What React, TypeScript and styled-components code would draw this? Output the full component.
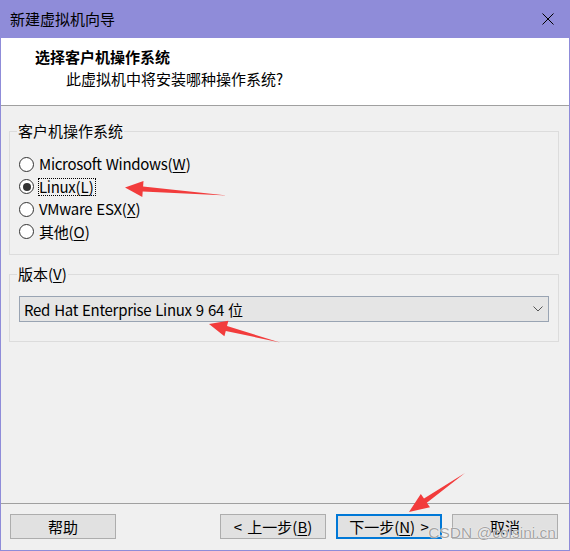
import React from 'react';
import styled, { createGlobalStyle } from 'styled-components';

const GlobalStyle = createGlobalStyle`
    body {
        margin: 0;
        background: #f0f0f0;
    }
    * {
        box-sizing: border-box;
    }
`;

const uiFont = `"Noto Sans CJK SC", "Noto Sans", sans-serif`;

const Window = styled.div`
    position: relative;
    width: 570px;
    height: 551px;
    display: flex;
    flex-direction: column;
    background: #f0f0f0;
    border: 1px solid #8f8cd9;
    border-top: 0;
    font-family: ${uiFont};
    font-size: 15px;
    color: #000;
`;

const TitleBar = styled.div`
    height: 38px;
    flex-shrink: 0;
    display: flex;
    align-items: center;
    justify-content: space-between;
    background: #8f8cd9;
    padding-left: 9px;
`;

const TitleText = styled.span`
    line-height: 20px;
`;

const CloseBox = styled.div`
    width: 42px;
    height: 38px;
    display: flex;
    align-items: center;
    justify-content: center;
`;

const Header = styled.div`
    height: 68px;
    flex-shrink: 0;
    background: #fff;
    border-bottom: 1px solid #a0a0a0;
    padding: 8px 0 0 34px;
`;

const Heading = styled.div`
    font-weight: bold;
    line-height: 22px;
`;

const SubHeading = styled.div`
    line-height: 22px;
    margin-left: 31px;
`;

const Body = styled.div`
    flex: 1;
    padding: 15px 10px 0 8px;
`;

const Group = styled.fieldset<{ $gap?: number }>`
    margin: ${({ $gap }) => $gap ?? 0}px 0 0;
    padding: 0 7px ${({ $gap }) => ($gap ? 19 : 11)}px;
    border: 1px solid #dcdcdc;
    min-width: 0;
`;

const Legend = styled.legend`
    padding: 0 1px;
    line-height: 20px;
`;

const RadioList = styled.div`
    padding-top: 12px;
    display: flex;
    flex-direction: column;
`;

const RadioRow = styled.div`
    height: 22.5px;
    display: flex;
    align-items: center;
    gap: 4px;
`;

const RadioCircle = styled.span<{ $checked?: boolean }>`
    width: 15px;
    height: 15px;
    margin-left: 2px;
    border-radius: 50%;
    border: 1px solid #333;
    background: #fff;
    display: flex;
    align-items: center;
    justify-content: center;
    &::after {
        content: '';
        width: 8px;
        height: 8px;
        border-radius: 50%;
        background: ${({ $checked }) => ($checked ? '#333' : 'transparent')};
    }
`;

const RadioLabel = styled.span<{ $focused?: boolean }>`
    line-height: 16px;
    border: 1px dotted ${({ $focused }) => ($focused ? '#000' : 'transparent')};
    padding: 0 1px 0 0;
`;

const Latin = styled.span`
    letter-spacing: -0.3px;
    word-spacing: 1px;
`;

const Key = styled.span`
    text-decoration: underline;
    text-underline-offset: 2px;
`;

const Select = styled.div`
    margin: 12px 2px 0;
    height: 26px;
    display: flex;
    align-items: center;
    justify-content: space-between;
    padding: 0 5px 0 4px;
    background: #e5e5e5;
    border: 1px solid #99a4b3;
`;

const Footer = styled.div`
    flex-shrink: 0;
    display: flex;
    gap: 10px;
    padding: 10px 11px 11px 9px;
    border-top: 1px solid #a0a0a0;
`;

const Button = styled.button<{ $primary?: boolean; $push?: boolean }>`
    width: 106px;
    height: 25px;
    padding: 0;
    font: inherit;
    color: #000;
    line-height: 20px;
    word-spacing: 2px;
    background: #e1e1e1;
    border: ${({ $primary }) => ($primary ? '2px solid #0078d7' : '1px solid #adadad')};
    margin-right: ${({ $push }) => ($push ? 'auto' : '0')};
`;

const Watermark = styled.div`
    position: absolute;
    right: 13px;
    bottom: 8px;
    font-family: 'Liberation Sans', Arial, sans-serif;
    font-size: 15.5px;
    line-height: 18px;
    color: rgba(140, 140, 140, 0.8);
    text-shadow: 0 0 1px #fff, 0 0 1px #fff;
    pointer-events: none;
`;

const Annotations = styled.svg`
    position: absolute;
    top: 0;
    left: -1px;
    pointer-events: none;
`;

const arrows = [
    '125,187.5 143.5,180.9 143.1,186.4 227,195.5 142.7,191.4 142.3,196.9',
    '209,324 228.4,320.8 227,326.1 280,342.5 225.8,330.9 224.4,336.2',
    '409,512 430,507.2 426.8,502.7 465,473 424,498.5 420.8,494',
];

const options = [
    { label: 'Microsoft Windows', key: 'W', checked: false },
    { label: 'Linux', key: 'L', checked: true },
    { label: 'VMware ESX', key: 'X', checked: false },
    { label: '其他', key: 'O', checked: false },
];

const App: React.FC = () => {
    return (
        <>
            <GlobalStyle />
            <Window>
                <TitleBar>
                    <TitleText>新建虚拟机向导</TitleText>
                    <CloseBox>
                        <svg width="12" height="12" viewBox="0 0 12 12">
                            <path d="M0.5 0.5 L11.5 11.5 M11.5 0.5 L0.5 11.5" stroke="#000" strokeWidth="1" />
                        </svg>
                    </CloseBox>
                </TitleBar>
                <Header>
                    <Heading>选择客户机操作系统</Heading>
                    <SubHeading>此虚拟机中将安装哪种操作系统?</SubHeading>
                </Header>
                <Body>
                    <Group>
                        <Legend>客户机操作系统</Legend>
                        <RadioList>
                            {options.map((item) => (
                                <RadioRow key={item.key}>
                                    <RadioCircle $checked={item.checked} />
                                    <RadioLabel $focused={item.checked}>
                                        <Latin>{item.label}</Latin>(<Key>{item.key}</Key>)
                                    </RadioLabel>
                                </RadioRow>
                            ))}
                        </RadioList>
                    </Group>
                    <Group $gap={9}>
                        <Legend>
                            版本(<Key>V</Key>)
                        </Legend>
                        <Select>
                            <Latin>Red Hat Enterprise Linux 9 64 位</Latin>
                            <svg width="10" height="6" viewBox="0 0 10 6">
                                <path d="M0.5 0.5 L5 5 L9.5 0.5" stroke="#555" strokeWidth="1" fill="none" />
                            </svg>
                        </Select>
                    </Group>
                </Body>
                <Footer>
                    <Button $push>帮助</Button>
                    <Button>
                        &lt; 上一步(<Key>B</Key>)
                    </Button>
                    <Button $primary>
                        下一步(<Key>N</Key>) &gt;
                    </Button>
                    <Button>取消</Button>
                </Footer>
                <Watermark>CSDN @colsini.cn</Watermark>
                <Annotations width="570" height="551">
                    {arrows.map((points, index) => (
                        <polygon key={index} points={points} fill="#f23c3c" />
                    ))}
                </Annotations>
            </Window>
        </>
    );
};

export default App;
